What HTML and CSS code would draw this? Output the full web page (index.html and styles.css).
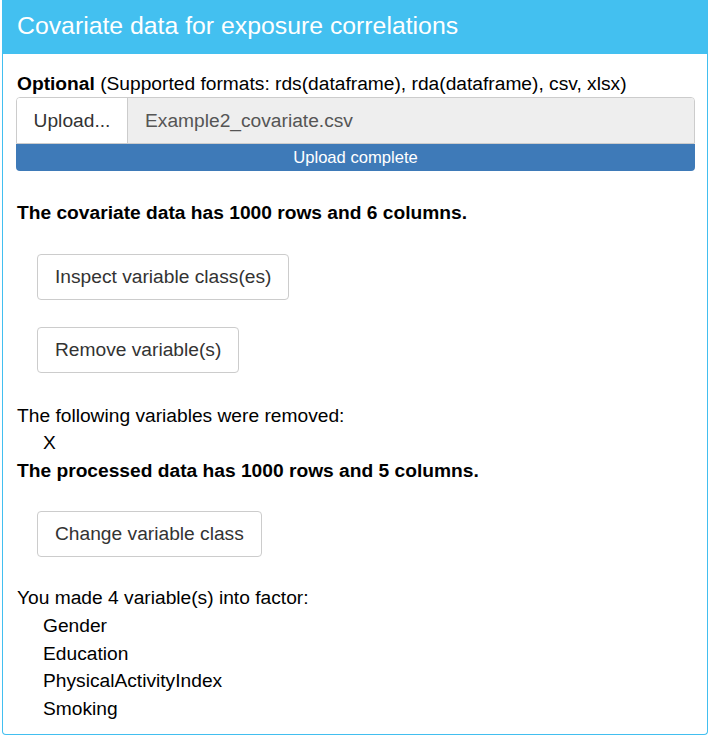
FILE: index.html
```html
<!DOCTYPE html>
<html>
<head>
<meta charset="utf-8">
<link rel="stylesheet" href="styles.css">
</head>
<body>
<div class="panel">
  <div class="panel-heading">Covariate data for exposure correlations</div>
  <div class="panel-body">
    <div class="label-line"><b>Optional</b> (Supported formats: rds(dataframe), rda(dataframe), csv, xlsx)</div>
    <div class="file-input">
      <span class="browse">Upload...</span>
      <span class="filename">Example2_covariate.csv</span>
    </div>
    <div class="progress">Upload complete</div>
    <div class="bold-line first">The covariate data has 1000 rows and 6 columns.</div>
    <div class="btn-row"><span class="btn">Inspect variable class(es)</span></div>
    <div class="btn-row"><span class="btn">Remove variable(s)</span></div>
    <div class="text-line removed">The following variables were removed:</div>
    <div class="item">X</div>
    <div class="bold-line">The processed data has 1000 rows and 5 columns.</div>
    <div class="btn-row third"><span class="btn">Change variable class</span></div>
    <div class="text-line made">You made 4 variable(s) into factor:</div>
    <div class="list">
      <div class="item">Gender</div>
      <div class="item">Education</div>
      <div class="item">PhysicalActivityIndex</div>
      <div class="item">Smoking</div>
    </div>
  </div>
</div>
</body>
</html>
```
FILE: styles.css
```css
html, body {
  margin: 0;
  padding: 0;
  background: #ffffff;
}
body {
  font-family: "Liberation Sans", Arial, sans-serif;
  color: #000;
  font-size: 19.2px;
}
.panel {
  margin-left: 2px;
  width: 704px;
  height: 734px;
  border: 1px solid #42bff0;
  border-top: none;
  border-radius: 0 0 4px 4px;
  box-sizing: content-box;
  display: flex;
  flex-direction: column;
}
.panel-heading {
  background: #43c0f0;
  color: #fff;
  font-size: 24.8px;
  height: 54px;
  line-height: 51px;
  padding-left: 14px;
}
.panel-body {
  padding: 0 12px 0 13px;
  display: flex;
  flex-direction: column;
}
.label-line {
  margin-top: 16px;
  line-height: 27.4px;
  padding-left: 1px;
}
.file-input {
  display: flex;
  height: 47px;
  box-sizing: border-box;
  border: 1px solid #cccccc;
  border-radius: 4px 4px 0 0;
  overflow: hidden;
}
.browse {
  background: #fff;
  color: #333;
  width: 110px;
  border-right: 1px solid #cccccc;
  display: flex;
  align-items: center;
  justify-content: center;
}
.filename {
  flex: 1;
  background: #eeeeee;
  color: #555;
  display: flex;
  align-items: center;
  padding-left: 17px;
}
.progress {
  height: 27px;
  background: #3e7ab8;
  color: #fff;
  border-radius: 0 0 4px 4px;
  font-size: 16.6px;
  line-height: 27px;
  text-align: center;
}
.bold-line {
  font-weight: bold;
  line-height: 27.4px;
  padding-left: 1px;
}
.bold-line.first {
  margin-top: 28px;
}
.btn-row {
  padding-left: 21px;
  margin-top: 27px;
  display: flex;
}
.btn {
  display: inline-flex;
  align-items: center;
  height: 46px;
  box-sizing: border-box;
  border: 1px solid #cccccc;
  border-radius: 4px;
  padding: 0 17px;
  color: #333;
}
.text-line {
  line-height: 27.4px;
  padding-left: 1px;
}
.text-line.removed { margin-top: 29px; }
.text-line.made { margin-top: 27px; }
.list {
  margin-top: 1px;
}
.item {
  padding-left: 27px;
  line-height: 27.4px;
}
```
